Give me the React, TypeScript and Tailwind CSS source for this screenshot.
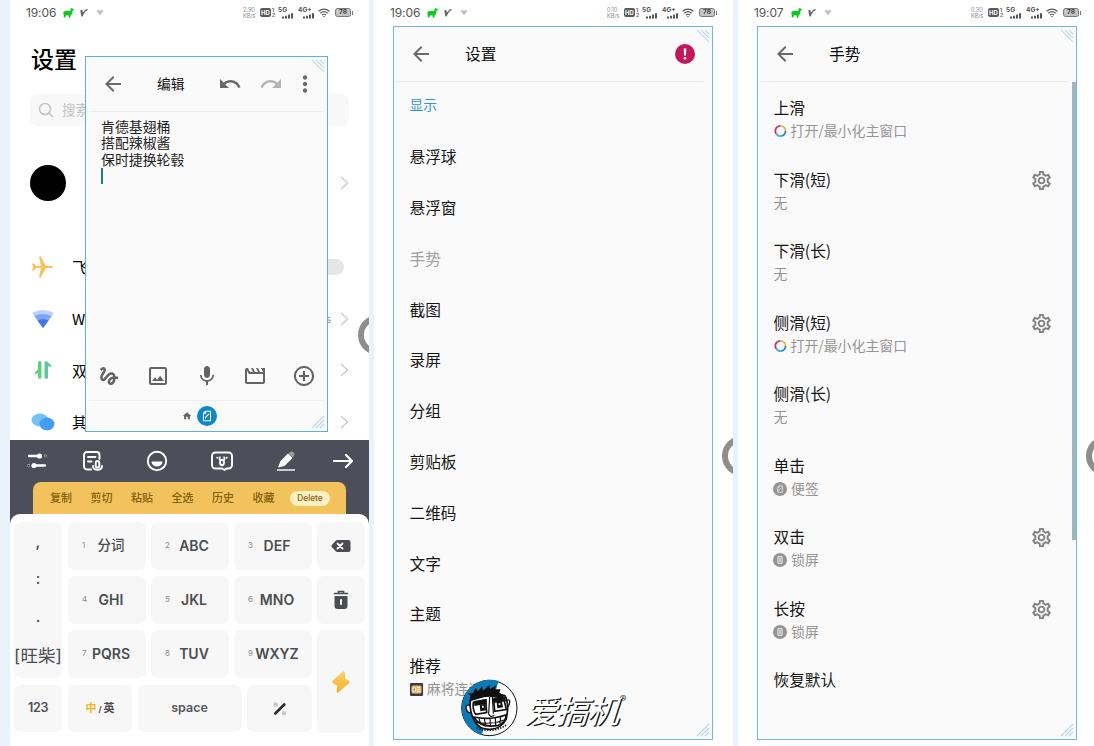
import React from "react";
import {
  MdArrowBack,
  MdUndo,
  MdRedo,
  MdMoreVert,
  MdGesture,
  MdOutlineImage,
  MdMic,
  MdAddCircleOutline,
  MdOutlineSettings,
  MdHome,
} from "react-icons/md";

function Signal({ label, width }: { label: string; width: string }) {
  return (
    <div className={`relative h-[14px] ${width}`}>
      <span className="absolute left-0 top-[1px] text-[6.5px] font-bold leading-none text-[#555]">{label}</span>
      <svg className="absolute bottom-[1px] right-0" width="11" height="6" fill="#555">
        <rect x="0" y="3.5" width="2" height="2" />
        <rect x="3" y="2.8" width="2" height="2.7" />
        <rect x="6" y="1.6" width="2" height="3.9" />
        <rect x="9" y="0.2" width="2" height="5.3" />
      </svg>
    </div>
  );
}

function StatusBar({ time, speed }: { time: string; speed: string }) {
  return (
    <div className="flex h-[26px] w-[359px] shrink-0 items-center pb-px pl-[16px] pr-[16px]">
      <span className="w-[31px] font-[Inter] text-[12px] leading-none tracking-[-0.1px] text-[#555]">{time}</span>
      <svg className="ml-[6px]" width="11" height="10" viewBox="0 0 11 10">
        <path
          d="M10.900 1.300 9.500.5 8.700 0 7.700.6 7.200 3.100 3 2.800 1 3.600 0 5.500l.7.4L.8 9.600h1.500L3 7.300l2.600.1.1 2.300h1.500l.6-2.600L9.200 6l.4-3.500 1.300-.2z"
          fill="#10c820"
        />
      </svg>
      <svg className="ml-[6px]" width="8" height="8" viewBox="0 0 8 8">
        <path d="M.3 1.200 2.300.9l.6 2.600L5.700.6 7.900.2 7 1.900 5.500 2.200 2.400 7.600H1.300z" fill="#666" />
      </svg>
      <svg className="ml-[8px]" width="8" height="7" viewBox="0 0 8 7">
        <path d="M.3 2.200 2 .6 4 1.200 6 .6l1.700 1.600L4 6.600z" fill="#c9cfcd" />
        <path d="M2.300 2.500 4 4.500l1.700-2" stroke="#9aa5a2" strokeWidth=".6" fill="none" />
      </svg>
      <div className="ml-auto flex items-center">
        <div className="flex w-[14px] flex-col font-[Inter] text-[5.5px] leading-[6px] text-[#888]">
          <span>{speed}</span>
          <span>KB/s</span>
        </div>
        <div className="ml-[3px] flex h-[9px] w-[11px] items-center justify-center rounded-[2px] bg-[#5a5a5a] font-[Inter] text-[6px] font-bold leading-none text-white">
          HD
        </div>
        <div className="flex w-[4px] flex-col pl-px font-[Inter] text-[5px] font-bold leading-[5px] text-[#666]">
          <span>1</span>
          <span>2</span>
        </div>
        <div className="ml-[3px] font-[Inter]">
          <Signal label="5G" width="w-[15px]" />
        </div>
        <div className="ml-[5px] font-[Inter]">
          <Signal label="4G+" width="w-[16px]" />
        </div>
        <svg className="ml-[4px]" width="12" height="10" viewBox="0 0 12 10" fill="none" stroke="#555" strokeWidth="1.200">
          <path d="M.6 3.300Q6-1.200 11.400 3.300M2.300 5.200Q6 2.200 9.700 5.200M4 7Q6 5.500 8 7" />
          <path d="M4.900 7.900h2.200L6 9.200z" fill="#555" stroke="none" />
        </svg>
        <div className="ml-[5px] flex h-[9px] w-[16px] items-center justify-center rounded-[2.5px] border border-[#777] bg-[#c4c4c4] font-[Inter] text-[6.5px] font-bold leading-none text-[#444]">
          78
        </div>
        <div className="ml-px h-[4px] w-px bg-[#777]" />
      </div>
    </div>
  );
}

function ResizeMarks() {
  return (
    <>
      <svg className="absolute right-[2px] top-[2px]" width="14" height="14" stroke="#c3dcec" strokeWidth="1.100">
        <path d="M1 1l12 12M5 1l8 8M9 1l4 4" />
      </svg>
      <svg className="absolute bottom-[2px] right-[2px]" width="14" height="14" stroke="#b9d6e9" strokeWidth="1.100">
        <path d="M1 13L13 1M5 13l8-8M9 13l4-4" />
      </svg>
    </>
  );
}

function EdgeRing({ place }: { place: string }) {
  return <div className={`absolute left-[348px] h-[40px] w-[40px] rounded-full border-[6px] border-[#8e8e8e] bg-white ${place}`} />;
}

function Chevron() {
  return (
    <svg width="9" height="14" viewBox="0 0 9 14" fill="none" stroke="#c9c9c9" strokeWidth="1.300">
      <path d="M1 1l6.500 6L1 13" />
    </svg>
  );
}

function NoteGlyph({ size }: { size: number }) {
  return (
    <svg width={size} height={size} viewBox="0 0 12 12" fill="none" stroke="currentColor" strokeWidth="1.100">
      <path d="M4.500 1.200h5v9.600h-7V3.200zM4.500 1.200v2h-2M4.500 8.500l.3-1.500L8 3.800" />
    </svg>
  );
}

function NoteWindow() {
  return (
    <div className="absolute left-[75px] top-[56px] flex h-[376px] w-[243px] flex-col border border-[#5fb0dc] bg-[#fafafa]">
      <div className="mx-[3px] flex h-[55px] items-center border-b border-[#ececec] text-[#6a6a6a]">
        <MdArrowBack size={24} className="ml-[12px] shrink-0" />
        <span className="ml-[32px] w-[30px] shrink-0 whitespace-nowrap text-[13.700px] leading-none text-[#111]">编辑</span>
        <MdUndo size={24} className="ml-[31px] shrink-0" />
        <MdRedo size={24} className="ml-[17px] shrink-0 text-[#b5b5b5]" />
        <MdMoreVert size={26} className="ml-[9px] shrink-0" />
      </div>
      <div className="flex-1 pl-[15px] pt-[6px] text-[13.900px] leading-[16.300px] text-[#222]">
        <p>肯德基翅桶</p>
        <p>搭配辣椒酱</p>
        <p>保时捷换轮毂</p>
        <div className="mt-[1px] h-[16px] w-[2px] bg-[#1a8577]" />
      </div>
      <div className="flex h-[48px] items-center justify-between pl-[11px] pr-[11px] text-[#636363]">
        <MdGesture size={24} />
        <MdOutlineImage size={24} />
        <MdMic size={24} />
        <svg width="24" height="24" viewBox="0 0 24 24" fill="currentColor">
          <path d="M4 6.470L5.760 10H20v8H4V6.470M22 4h-4l2 4h-3l-2-4h-2l2 4h-3l-2-4H8l2 4H7L5 4H4c-1.100 0-2 .9-2 2v12c0 1.100.9 2 2 2h16c1.100 0 2-.9 2-2V4z" />
        </svg>
        <MdAddCircleOutline size={24} />
      </div>
      <div className="mx-[3px] flex h-[31px] items-center border-t border-[#efefef] pb-px pl-[93px]">
        <MdHome size={10} className="text-[#666]" />
        <div className="ml-[5px] flex h-[20px] w-[20px] items-center justify-center rounded-full bg-[#0e87cb] text-white">
          <NoteGlyph size={12} />
        </div>
      </div>
      <ResizeMarks />
    </div>
  );
}

function SettingRow({ icon, label, children }: { icon: React.ReactNode; label: string; children: React.ReactNode }) {
  return (
    <div className="flex h-[51.700px] items-center pl-[20px] pr-[20px]">
      <div className="flex w-[26px] justify-center">{icon}</div>
      <span className="ml-[16px] text-[15px] leading-none text-black">{label}</span>
      <div className="ml-auto flex items-center">{children}</div>
    </div>
  );
}

function KeyboardTools() {
  return (
    <div className="flex h-[42px] items-center pl-[15px] text-white">
      <svg className="h-[24px] w-[24px]" viewBox="0 0 24 24" stroke="currentColor" strokeWidth="2.300" strokeLinecap="round">
        <path d="M4 7h11M9 16.500h11" />
        <circle cx="14.500" cy="7" r="2.600" fill="currentColor" stroke="none" />
        <circle cx="9" cy="16.500" r="2.600" fill="currentColor" stroke="none" />
        <circle cx="20.500" cy="7" r=".3" stroke="#a8abb3" />
        <circle cx="3.700" cy="16.500" r=".3" stroke="#a8abb3" />
      </svg>
      <svg className="ml-[32px] h-[24px] w-[24px]" viewBox="0 0 24 24" fill="none" stroke="currentColor" strokeWidth="1.900" strokeLinecap="round">
        <path d="M10 20.500H6a3 3 0 0 1-3-3V6a3 3 0 0 1 3-3h9.500a3 3 0 0 1 3 3v4M7 8h7.500M7 12.500h3.500M12 17c0 5 9 5 9 0" />
        <rect x="14.700" y="12" width="3.600" height="6.500" rx="1.800" />
      </svg>
      <svg className="ml-[40px] h-[24px] w-[24px]" viewBox="0 0 24 24">
        <circle cx="12" cy="12" r="9.200" fill="none" stroke="currentColor" strokeWidth="1.900" />
        <path d="M6.500 12.500h11c-.3 6.600-10.700 6.600-11 0z" fill="currentColor" />
      </svg>
      <svg className="ml-[41px] h-[24px] w-[24px]" viewBox="0 0 24 24" fill="none" stroke="currentColor" strokeWidth="1.900" strokeLinejoin="round">
        <path d="M5.500 3.500h13a3.500 3.500 0 0 1 3.500 3.500v9a3.500 3.500 0 0 1-3.500 3.500h-2.300L14.500 21l-2.500-1.500H5.500A3.500 3.500 0 0 1 2 16V7a3.500 3.500 0 0 1 3.500-3.500z" />
        <ellipse cx="12" cy="13.500" rx="2" ry="2.700" />
        <path d="M7 8.500l.8.500M17 8.500l-.8.500M9.500 10.500L10 8M14.500 10.500L14 8" strokeLinecap="round" strokeWidth="1.500" />
      </svg>
      <svg className="ml-[40px] h-[24px] w-[24px]" viewBox="0 0 24 24">
        <path d="M4 18.500l2.500-6.500 7.500-7.500 4.500 4.500-8 8z" fill="currentColor" />
        <path d="M15.500 3.500c2-2.500 6.500.5 4.500 3.500l-1.200 1.500-4.500-3.700z" fill="#989ba4" />
        <path d="M3 21h18" stroke="#e1e2e5" strokeWidth="1.700" />
      </svg>
      <svg className="ml-[33px] h-[24px] w-[24px]" viewBox="0 0 24 24" fill="none" stroke="currentColor" strokeWidth="2.200" strokeLinecap="round" strokeLinejoin="round">
        <path d="M3 12h18M15 6l6 6-6 6" />
      </svg>
    </div>
  );
}

const keyClass = "relative flex items-center justify-center rounded-[7px] bg-[#f7f7f7]";

function LetterKey({ n, text }: { n: string; text: string }) {
  return (
    <div className={`${keyClass} h-[48px]`}>
      <span className="absolute left-[14px] top-[19px] text-[8px] leading-none text-[#8a8a8a]">{n}</span>
      <span className={`pl-[8px] leading-none text-[#4b4d52] ${n === "1" ? "text-[13.500px] font-medium" : "text-[14px] font-semibold"}`}>
        {text}
      </span>
    </div>
  );
}

const letterKeys = ["分词", "ABC", "DEF", "GHI", "JKL", "MNO", "PQRS", "TUV", "WXYZ"];

function Keyboard() {
  return (
    <div className="absolute left-0 top-[440px] flex h-[306px] w-[359px] flex-col bg-[#4c4f5a] font-[Inter,'Noto_Sans_CJK_SC',sans-serif]">
      <KeyboardTools />
      <div className="ml-[23px] flex h-[33px] w-[313px] items-center rounded-t-[8px] bg-[#f2c35c] pl-[17px] text-[11px] leading-none text-[#80600b]">
        {["复制", "剪切", "粘贴", "全选", "历史", "收藏"].map((t) => (
          <span key={t} className="w-[40.500px] font-medium">
            {t}
          </span>
        ))}
        <span className="-ml-[3px] flex h-[15px] w-[40px] items-center justify-center rounded-full bg-[#fdf1c4] text-[8.300px] font-medium">
          Delete
        </span>
      </div>
      <div className="-mt-px flex flex-1 rounded-t-[10px] bg-white pl-[4px] pt-[8px]">
        <div className="flex w-[48px] flex-col gap-[7px]">
          <div className="flex h-[156px] flex-col items-center rounded-[7px] bg-[#f7f7f7] pt-[12px] text-[15px] leading-none text-[#4b4d52]">
            <span className="h-[37px] font-semibold">,</span>
            <span className="h-[38px] font-medium">:</span>
            <span className="h-[38px] font-medium">.</span>
            <span className="whitespace-nowrap text-[17.500px]">[旺柴]</span>
          </div>
          <div className={`${keyClass} h-[47px] text-[12.500px] font-semibold tracking-[-0.300px] text-[#4b4d52]`}>123</div>
        </div>
        <div className="ml-[6px] flex w-[244px] flex-col gap-[7px]">
          <div className="grid grid-cols-3 gap-x-[5px] gap-y-[6px]">
            {letterKeys.map((t, i) => (
              <LetterKey key={t} n={String(i + 1)} text={t} />
            ))}
          </div>
          <div className="flex h-[47px] gap-[5.500px]">
            <div className={`${keyClass} w-[64px] gap-[2px] text-[11px] font-bold text-[#4b4d52]`}>
              <span className="text-[#f3b622]">中</span>
              <span className="text-[8px]">/</span>
              <span>英</span>
            </div>
            <div className={`${keyClass} w-[104px] pb-[1px] text-[12.500px] font-semibold text-[#55575c]`}>space</div>
            <div className={`${keyClass} w-[65px]`}>
              <svg width="16" height="16" viewBox="0 0 16 16">
                <circle cx="3.800" cy="3.500" r="2.300" fill="#c8c8c8" />
                <circle cx="12" cy="12.300" r="2.300" fill="#c8c8c8" />
                <path d="M3.300 12.500L12.300 3.500" stroke="#2b2b2b" strokeWidth="2.600" strokeLinecap="round" />
              </svg>
            </div>
          </div>
        </div>
        <div className="ml-[5px] flex w-[48px] flex-col gap-[6px] text-[#4b4d52]">
          <div className={`${keyClass} h-[48px]`}>
            <svg width="20" height="14" viewBox="0 0 20 14">
              <path d="M6.500 1H17.500a2 2 0 0 1 2 2v8a2 2 0 0 1-2 2H6.500a2.500 2.500 0 0 1-2-1L.8 8a1.700 1.700 0 0 1 0-2L4.500 2a2.500 2.500 0 0 1 2-1z" fill="currentColor" />
              <path d="M6.500 4.500l5 5M11.500 4.500l-5 5" stroke="white" strokeWidth="1.800" strokeLinecap="round" />
            </svg>
          </div>
          <div className={`${keyClass} h-[48px]`}>
            <svg width="16" height="20" viewBox="0 0 16 20">
              <path d="M1.500 3.500h13M5.500 3V1.500h5V3" stroke="currentColor" strokeWidth="1.700" fill="none" strokeLinecap="round" />
              <path d="M1.500 6h13v10a3 3 0 0 1-3 3h-7a3 3 0 0 1-3-3z" fill="currentColor" />
              <rect x="7" y="9" width="2" height="6" rx="1" fill="white" />
            </svg>
          </div>
          <div className={`${keyClass} h-[103px]`}>
            <svg width="20" height="24" viewBox="0 0 20 24">
              <defs>
                <linearGradient id="bolt" x1="0" y1="0" x2="0" y2="1">
                  <stop offset="0" stopColor="#f9cf6e" />
                  <stop offset="1" stopColor="#f4b429" />
                </linearGradient>
              </defs>
              <path
                d="M12 1.500 1.600 10.500q-.8 1.200 0 2.200l4.700 3-.8 6.300q.6 1.300 1.700.6L18.300 13q.7-1.200 0-2L14 8.500l0-6.200q-.8-1.400-2-.8z"
                fill="url(#bolt)"
              />
            </svg>
          </div>
        </div>
      </div>
    </div>
  );
}

function PhoneOne() {
  return (
    <div className="relative flex h-[746px] w-[359px] shrink-0 flex-col overflow-hidden bg-white">
      <StatusBar time="19:06" speed="2.90" />
      <h1 className="mt-[20px] pl-[21px] text-[23px] font-medium leading-[24px] text-black">设置</h1>
      <div className="ml-[20px] mt-[24px] flex h-[32px] w-[319px] items-center rounded-[8px] bg-[#f8f8f8] pl-[8px] text-[13.500px] text-[#c2c2c2]">
        <svg width="16" height="16" viewBox="0 0 16 16" fill="none" stroke="#c4c4c4" strokeWidth="1.600">
          <circle cx="7" cy="7" r="5.500" />
          <path d="M11 11l4 4" />
        </svg>
        <span className="ml-[8px] leading-none">搜索</span>
      </div>
      <div className="mt-[39px] flex h-[36px] items-center justify-between pl-[20px] pr-[20px]">
        <div className="h-[36px] w-[36px] rounded-full bg-black" />
        <Chevron />
      </div>
      <div className="mt-[40px]">
        <SettingRow
          label="飞行模式"
          icon={
            <svg width="24" height="24" viewBox="0 0 24 24">
              <path d="M1 8.500h2L5.500 11H10L8 2l1.500-1L15 11h6q2.500 1 0 2h-6L9.500 23 8 22l2-9H5.500L3 15.500H1L2 12z" fill="#f7c25f" />
            </svg>
          }
        >
          <div className="mr-[5px] h-[16px] w-[28px] rounded-full bg-[#e6e6e6]" />
        </SettingRow>
        <SettingRow
          label="WLAN"
          icon={
            <svg width="24" height="20" viewBox="0 0 24 20">
              <path d="M1 4Q12-2 23 4L12 19z" fill="#bfd0fa" />
              <path d="M3.300 7Q12 3 20.700 7L12 19z" fill="#7fa5f3" />
              <path d="M6.500 11.500Q12 8.500 17.500 11.500L12 19z" fill="#3f79e8" />
            </svg>
          }
        >
          <span className="mr-[9px] text-[11px] text-[#999]">5G_s</span>
          <Chevron />
        </SettingRow>
        <SettingRow
          label="双卡与移动网络"
          icon={
            <svg width="18" height="20" viewBox="0 0 18 20">
              <path d="M7.500 2v16.500H4V13L.6 14.500.8 13 4 9V2q1.500-2 3.500 0z" fill="#5fd17a" />
              <path d="M10.500 18V1.500H13l4.500 4-.3 1.500-3.200-1V18q-1.500 2-3.500 0z" fill="#62c7a0" />
            </svg>
          }
        >
          <Chevron />
        </SettingRow>
        <SettingRow
          label="其他网络与连接"
          icon={
            <svg width="24" height="18" viewBox="0 0 24 18">
              <ellipse cx="9" cy="7" rx="8.500" ry="6.500" fill="#74c1f7" />
              <ellipse cx="16" cy="11" rx="7.500" ry="6.500" fill="#459df1" />
            </svg>
          }
        >
          <Chevron />
        </SettingRow>
      </div>
      <EdgeRing place="top-[315px]" />
      <NoteWindow />
      <Keyboard />
    </div>
  );
}

function WindowHeader({ title, alert }: { title: string; alert?: boolean }) {
  return (
    <div className="ml-[2px] mr-[8px] flex h-[55px] shrink-0 items-center border-b border-[#ececec]">
      <MdArrowBack size={24} className="ml-[13px] text-[#6a6a6a]" />
      <span className="ml-[32px] text-[15.700px] leading-none text-[#0c0c0c]">{title}</span>
      {alert && (
        <div className="ml-auto mr-[9px] flex h-[20px] w-[20px] items-center justify-center rounded-full bg-[#c2185b]">
          <svg width="4" height="12" viewBox="0 0 4 12" fill="white">
            <path d="M.7.500h2.600L3 7.500H1z" />
            <circle cx="2" cy="10.200" r="1.300" />
          </svg>
        </div>
      )}
    </div>
  );
}

function PhoneTwo() {
  const items = ["悬浮球", "悬浮窗", "手势", "截图", "录屏", "分组", "剪贴板", "二维码", "文字", "主题"];
  return (
    <div className="relative flex h-[746px] w-[359px] shrink-0 flex-col overflow-hidden bg-white">
      <StatusBar time="19:06" speed="0.10" />
      <div className="relative ml-[19px] flex h-[714px] w-[320px] flex-col border border-[#6fb9de] bg-[#fafafa]">
        <WindowHeader title="设置" alert />
        <div className="pl-[15.500px]">
          <div className="flex h-[49.600px] items-center pb-[3px] text-[13.700px] leading-none text-[#2f97d3]">显示</div>
          {items.map((t) => (
            <div
              key={t}
              className={`flex h-[50.800px] items-center text-[15.700px] leading-none ${t === "手势" ? "text-[#a0a0a0]" : "text-[#161616]"}`}
            >
              {t}
            </div>
          ))}
          <div className="pt-[13.500px]">
            <div className="text-[15.700px] leading-[25px] text-[#161616]">推荐</div>
            <div className="flex h-[22px] items-center text-[13.800px] leading-none text-[#949494]">
              <svg width="13" height="13" viewBox="0 0 13 13">
                <rect width="13" height="13" rx="1" fill="#3b3b4a" />
                <rect x="1.500" y="2.500" width="10" height="8" rx="1.500" fill="#f0bd78" />
                <path d="M3 5h2.500v3H3zM7.500 4.500h2.500M7.500 6.500h2.500M7.500 8.500h2.500" stroke="#fff0cf" fill="#b35c32" />
              </svg>
              <span className="ml-[4.500px]">麻将连连看</span>
            </div>
          </div>
        </div>
        <ResizeMarks />
      </div>
      <EdgeRing place="top-[436px]" />
      <Brand />
    </div>
  );
}

function Brand() {
  return (
    <div className="absolute left-[87px] top-[679px] flex items-start">
      <svg width="57" height="58" viewBox="0 0 171 174">
        <circle cx="85" cy="87" r="83" fill="#fff" stroke="#111" strokeWidth="3" />
        <path d="M113 6A85 85 0 1 0 62 169z" fill="#0c7ab4" />
        <path d="M27 79Q12 75 16 91q5 14 15 8M136 65q13-8 9 10-2 11-10 9" fill="#fff" stroke="#111" strokeWidth="4" />
        <path d="M28 62Q70 36 132 50q8 12 8 42l-4 28q-14 28-48 31-33 1-46-23Q24 100 28 62z" fill="#fff" stroke="#111" strokeWidth="5" />
        <path d="M26 68L28 50l-7-7 15 0 8-16 6 10 13-15 3 13 19-17 2 12 19-11-4 12 17 0-4 10 15 8-6 12Q86 46 53 59L33 65z" fill="#111" />
        <path d="M37 70l37-7 3 38-33 5q-10-14-7-36zM98 60l30-3 8 35-35 5z" fill="#fff" stroke="#111" strokeWidth="5" />
        <path d="M39 66l38-6 0 14-37 7zM98 56l34-3 3 14-37 5z" fill="#111" />
        <path d="M56 77l17-3 2 20-17 3zM107 70l16-3 3 18-17 3z" fill="#111" />
        <path d="M63 80h5v6h-5zM113 73h5v5h-5z" fill="#fff" />
        <path d="M86 54l-3 51q5 12 17 4M94 54l3 50" fill="none" stroke="#111" strokeWidth="3.500" />
        <path d="M38 114q48 11 98-7-2 24-24 32-53 10-74-25z" fill="#fff" stroke="#111" strokeWidth="5" />
        <path d="M54 118l5 17M70 119l4 23M87 119l2 24M103 117l1 23M119 113l-2 20M45 130q48 8 83-7" fill="none" stroke="#111" strokeWidth="3.500" />
        <path d="M47 147q47 17 88-8" fill="none" stroke="#111" strokeWidth="5" strokeDasharray="4 4" />
      </svg>
      <div className="ml-[5px] mt-[11px] flex items-start">
        <span className="inline-block origin-bottom-left -skew-x-[18deg] text-[32px] leading-[38px] tracking-[-1px] text-white [text-shadow:1px_1px_0_#111,1.300px_0.500px_0_#222]">
          爱搞机
        </span>
        <span className="ml-[4px] mt-[4px] text-[13px] font-medium leading-[13px] text-[#333]">®</span>
      </div>
    </div>
  );
}

type Kind = "ring" | "note" | "lock" | "none";
type Gesture = { title: string; sub: string; kind: Kind; gear?: boolean };

const gestures: Gesture[] = [
  { title: "上滑", sub: "打开/最小化主窗口", kind: "ring" },
  { title: "下滑(短)", sub: "无", kind: "none", gear: true },
  { title: "下滑(长)", sub: "无", kind: "none" },
  { title: "侧滑(短)", sub: "打开/最小化主窗口", kind: "ring", gear: true },
  { title: "侧滑(长)", sub: "无", kind: "none" },
  { title: "单击", sub: "便签", kind: "note" },
  { title: "双击", sub: "锁屏", kind: "lock", gear: true },
  { title: "长按", sub: "锁屏", kind: "lock", gear: true },
];

function GestureIcon({ kind }: { kind: Kind }) {
  if (kind === "none") return null;
  if (kind === "ring") {
    return (
      <svg className="mr-[4px]" width="13" height="14" viewBox="0 0 14 14" fill="none" strokeWidth="2">
        <path d="M7 1.500A5.500 5.500 0 0 1 12.500 7" stroke="#e9b04a" />
        <path d="M12.500 7A5.500 5.500 0 0 1 7 12.500" stroke="#2788c9" />
        <path d="M7 12.500A5.500 5.500 0 0 1 2.200 9.700" stroke="#45b4de" />
        <path d="M2.200 9.700A5.500 5.500 0 0 1 3.800 2.500" stroke="#cf2a66" />
        <path d="M3.800 2.500A5.500 5.500 0 0 1 7 1.500" stroke="#795a9d" />
      </svg>
    );
  }
  return (
    <div className="-ml-[0.500px] mr-[4px] flex h-[14px] w-[14px] items-center justify-center rounded-full bg-[#949494] text-[#f4f4f4]">
      {kind === "note" ? (
        <NoteGlyph size={8} />
      ) : (
        <svg width="8" height="8" viewBox="0 0 8 8" fill="none" stroke="currentColor">
          <path d="M2 .7h4v6.600H2zM3 3h2M3 5h2" />
        </svg>
      )}
    </div>
  );
}

function PhoneThree() {
  return (
    <div className="relative flex h-[746px] w-[359px] shrink-0 flex-col overflow-hidden bg-white">
      <StatusBar time="19:07" speed="0.30" />
      <div className="relative ml-[19px] flex h-[714px] w-[320px] flex-col border border-[#6fb9de] bg-[#fafafa]">
        <WindowHeader title="手势" />
        <div className="flex flex-1">
          <div className="flex-1 pl-[15.500px]">
            {gestures.map((g) => (
              <div key={g.title} className="flex h-[71.500px] justify-between pr-[19px] pt-[13px]">
                <div>
                  <div className="text-[15.700px] leading-[25px] text-[#161616]">{g.title}</div>
                  <div className="flex h-[22px] items-center text-[13.900px] leading-none text-[#949494]">
                    <GestureIcon kind={g.kind} />
                    {g.sub}
                  </div>
                </div>
                {g.gear && <MdOutlineSettings size={23} className="mt-[2px] text-[#808080]" />}
              </div>
            ))}
            <div className="pt-[13px] text-[15.700px] leading-[25px] text-[#161616]">恢复默认</div>
          </div>
          <div className="h-[458px] w-[4px] bg-[#9eb6bf]" />
        </div>
        <ResizeMarks />
      </div>
      <EdgeRing place="top-[436px]" />
    </div>
  );
}

export default function App() {
  return (
    <div className="flex h-[746px] w-[1094px] gap-[5px] overflow-hidden bg-[#e9f1fa] pl-[10px] font-['Noto_Sans_CJK_SC',sans-serif]">
      <PhoneOne />
      <PhoneTwo />
      <PhoneThree />
    </div>
  );
}
